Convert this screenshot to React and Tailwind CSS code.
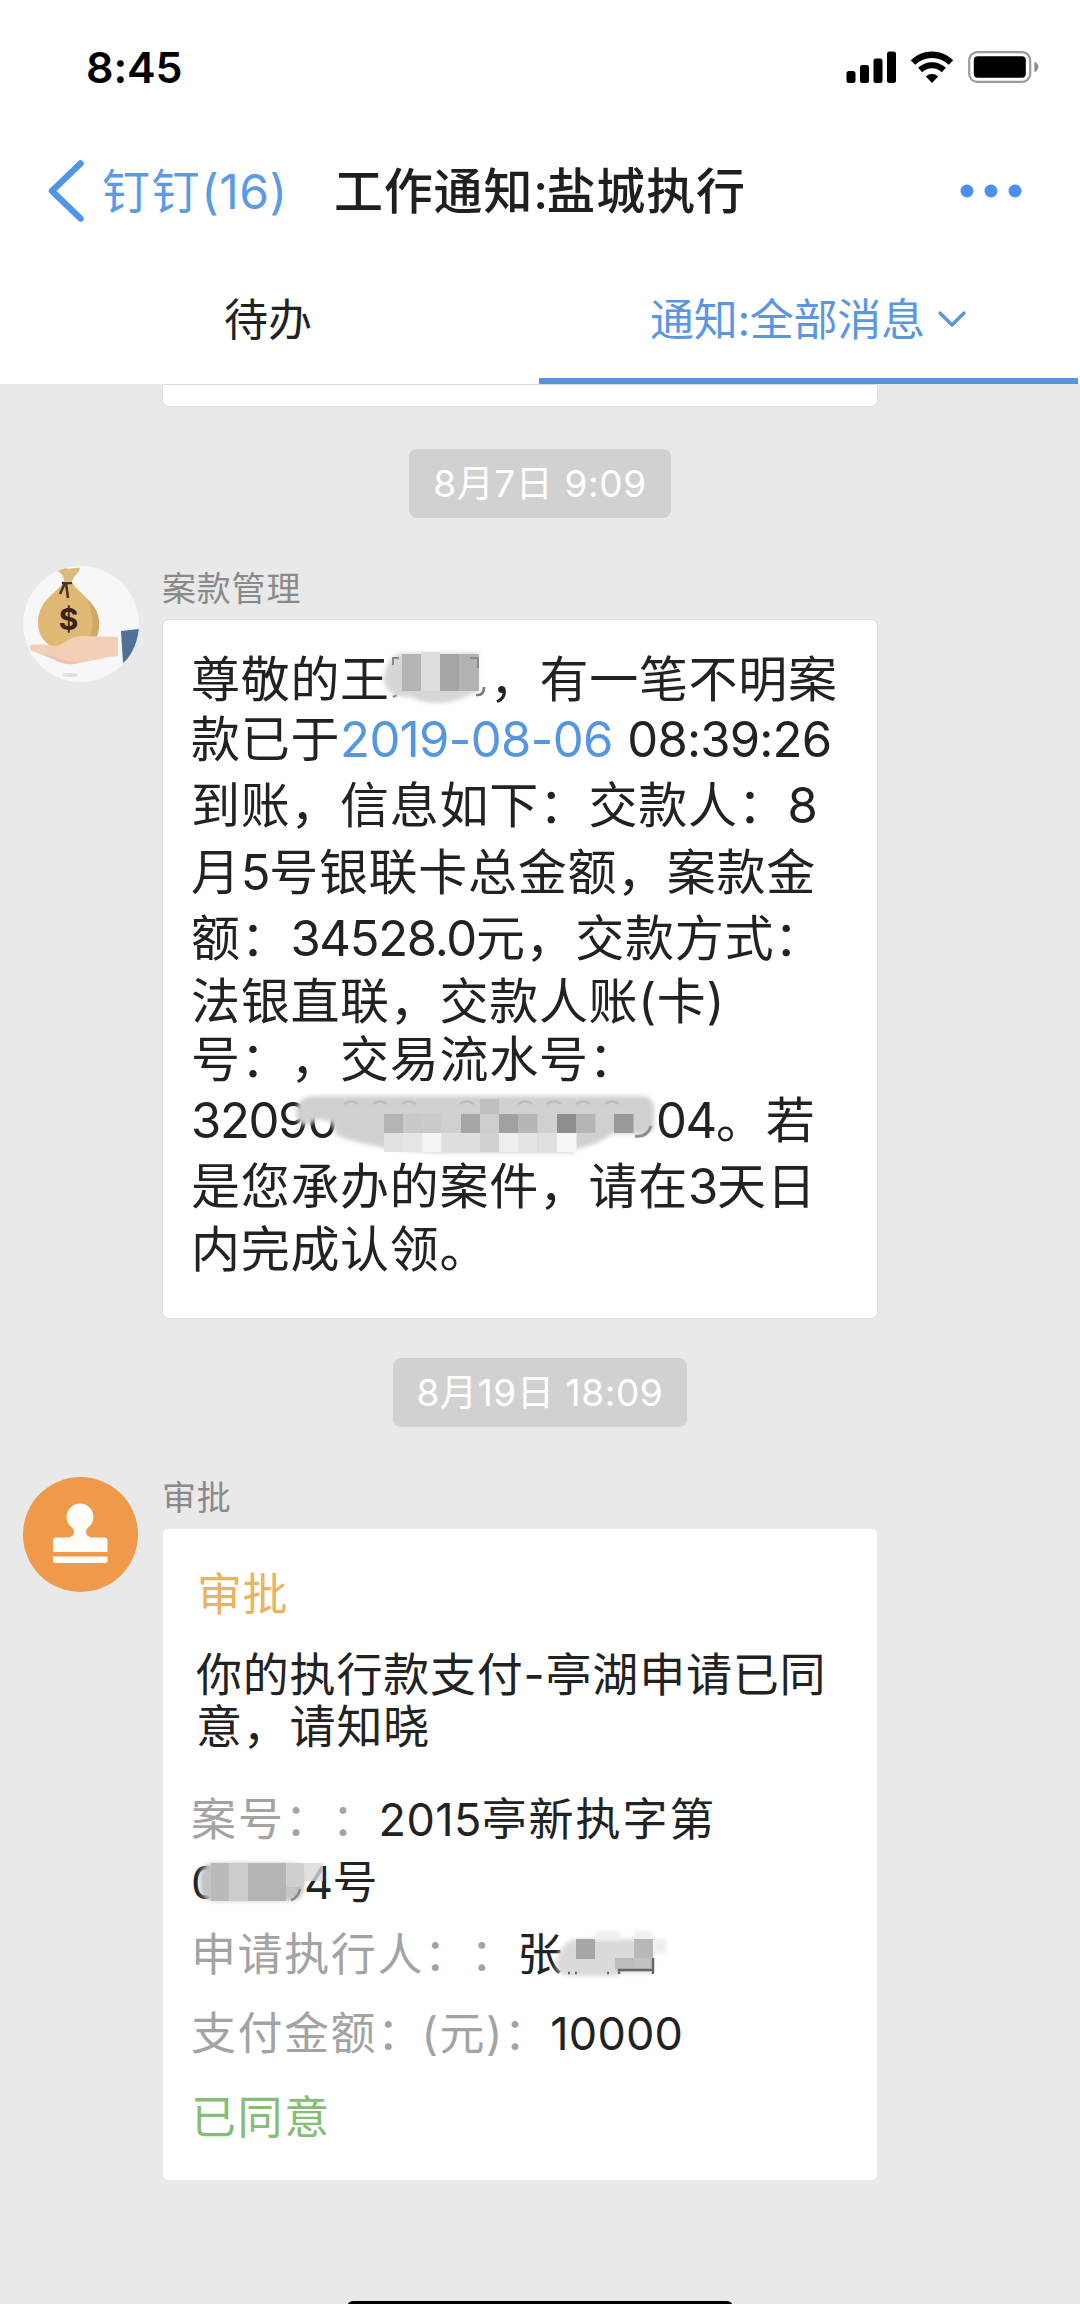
function StatusBar() {
  return (
    <div className="flex h-[133px] items-center justify-between pl-[86px] pr-[40px]">
      <span className="text-[43px] font-semibold leading-[50px] tracking-[-0.1px] text-black">8:45</span>
      <div className="flex items-center">
        <svg width="50" height="32" viewBox="0 0 50 32" className="mr-[14px]">
          <rect x="0.5" y="20" width="9" height="12" rx="2.5" />
          <rect x="14" y="14" width="9" height="18" rx="2.5" />
          <rect x="27.5" y="7.5" width="9" height="24.5" rx="2.5" />
          <rect x="41" y="0.5" width="9" height="31.5" rx="2.5" />
        </svg>
        <svg width="44" height="32" viewBox="0 0 44 32" className="mr-[14px]">
          <path d="M3 11.5a27 27 0 0 1 38 0" fill="none" stroke="#000" strokeWidth="6.4" />
          <path d="M10.2 19a17 17 0 0 1 23.6 0" fill="none" stroke="#000" strokeWidth="6" />
          <path d="M22 32l-6.2-6.4a9 9 0 0 1 12.4 0z" />
        </svg>
        <svg width="72" height="32" viewBox="0 0 72 32">
          <rect x="1.2" y="1.2" width="61" height="29.6" rx="8" fill="none" stroke="#9b9b9b" strokeWidth="2.2" />
          <rect x="5.8" y="5.3" width="52" height="21.4" rx="4" />
          <path d="M66.3 10.8c5.4 1.6 5.4 8.8 0 10.4z" fill="#8f8f8f" />
        </svg>
      </div>
    </div>
  );
}

function NavBar() {
  return (
    <div className="flex h-[115px] items-center whitespace-nowrap pl-[46px]">
      <svg width="40" height="64" viewBox="0 0 40 64" fill="none" stroke="#5096e8" strokeWidth="6.5" strokeLinecap="round" strokeLinejoin="round">
        <path d="M34.5 4.5L6 32l28.5 27.5" />
      </svg>
      <span className="ml-[16px] w-[232px] pt-[2px] text-[48px] leading-[56px] tracking-[0.5px] text-[#5b9be6]">
        <span className="tracking-[1.6px]">钉钉</span>(16)
      </span>
      <h1 className="pt-[2px] text-[49px] font-medium leading-[56px] tracking-[0.8px] text-[#1f1f1f]">
        工作通知<span className="tracking-[-1.5px]">:</span>盐城执行
      </h1>
      <svg width="62" height="16" viewBox="0 0 62 16" fill="#4d90f3" className="ml-auto mr-[58px]">
        <circle cx="7" cy="8" r="6.5" />
        <circle cx="31" cy="8" r="6.5" />
        <circle cx="55" cy="8" r="6.5" />
      </svg>
    </div>
  );
}

function Tabs() {
  return (
    <div className="flex h-[136px] whitespace-nowrap text-[44px] leading-[56px]">
      <div className="flex w-[539px] items-center justify-center border-b-[6px] border-transparent pr-[3px] pt-[13px] text-[#222]">
        待办
      </div>
      <div className="flex w-[539px] items-center border-b-[6px] border-[#5b90e0] pl-[111px] pt-[13px] text-[#5b97df]">
        <span className="tracking-[-0.3px]">通知:全部消息</span>
        <svg width="30" height="20" viewBox="0 0 30 20" fill="none" stroke="#5b97df" strokeWidth="3.4" strokeLinecap="round" strokeLinejoin="round" className="ml-[12px]">
          <path d="M3 3l12 12L27 3" />
        </svg>
      </div>
    </div>
  );
}

function TimePill({ children }) {
  return (
    <div className="flex h-[69px] items-center self-center rounded-[8px] bg-[#d1d1d1] px-[24px] pt-[1px] text-[37px] tracking-[0.6px] text-white">
      {children}
    </div>
  );
}

function MoneyAvatar() {
  return (
    <svg width="116" height="116" viewBox="0 0 116 116" className="-mt-[2px] shrink-0">
      <clipPath id="avatar">
        <circle cx="58" cy="58" r="58" />
      </clipPath>
      <circle cx="58" cy="58" r="58" fill="#f7f7f7" />
      <g clipPath="url(#avatar)">
        <path d="M41 16C34 27 15 34 15 57c0 12 7 20 13 23h38c7-4 11-13 10-24C75 35 56 29 49 16z" fill="#dfb974" />
        <path d="M64 34c9 7 12 15 12 23 0 10-4 19-10 23h-4c8-9 11-28 2-46z" fill="#cfa766" />
        <path d="M33 3c4 1 6 0 9-1 5 2 9-1 15 0-1 5-5 6-8 13h-8c0-6-4-8-8-12z" fill="#dcba7e" />
        <path d="M39 17h10M42 17l-5 11M43 17l2 15" stroke="#4c3423" strokeWidth="2.6" fill="none" />
        <path d="M8 79c8-1 17 0 25 1 8-1 13-10 27-10l35 1v19c-14 1-20 4-34 6-11 3-17 1-27-4L9 85c-3-2-3-5-1-6z" fill="#f3cfb6" />
        <path d="M10 85l26 7c9 4 16 5 25 2l-9 4c-9 1-15-1-22-5z" fill="#eec2ab" />
        <path d="M98 65l19-2v20l-17 14z" fill="#4f7195" />
        <ellipse cx="47" cy="109" rx="8" ry="2" fill="#dedede" />
      </g>
      <text x="45.5" y="64" textAnchor="middle" fontSize="30" fontWeight="700" fill="#3a2218">$</text>
    </svg>
  );
}

function StampAvatar() {
  return (
    <svg width="116" height="116" viewBox="0 0 116 116" className="shrink-0">
      <circle cx="57.5" cy="57.5" r="57.5" fill="#ef994b" />
      <g fill="#fffdf8">
        <path d="M57 26.5a13.3 13.3 0 0 1 8 24c-3 3-3 8 3 10h13.5q3 0 3 3v11.5H30V63.5q0-3 3-3h13c6-2 6-7 3-10a13.3 13.3 0 0 1 8-24z" />
        <path d="M30 79.5h54.5v4q0 2.5-2.5 2.5H32.5q-2.5 0-2.5-2.5z" />
      </g>
    </svg>
  );
}

// Censored name after 王
function NameMosaic() {
  return (
    <svg width="100" height="56" viewBox="0 0 100 56" className="relative -top-[9px] inline-block overflow-visible align-middle">
      <path d="M94 40q0 9-8 8M3 50l4-2" stroke="#777" strokeWidth="2.5" fill="none" />
      <path d="M-6 30Q-2 8 12 6h76v38Q66 56 50 56 30 56 22 50-6 52-6 30z" fill="#d6d6d6" className="blur-[2px]" />
      <rect x="12" y="7" width="19" height="37" fill="#b4b4b4" />
      <rect x="31" y="5" width="19" height="39" fill="#dcdcdc" />
      <rect x="50" y="7" width="19" height="37" fill="#a6a6a6" />
      <rect x="69" y="7" width="20" height="37" fill="#b2b2b2" />
      <path d="M3 18v-7h6M80 11h8v10" stroke="#8a8a8a" strokeWidth="2" fill="none" />
    </svg>
  );
}

const serialBlocks = [
  [90, "#b4b4b4"],
  [109, "#c9c9c9"],
  [128, "#cbcbcb"],
  [167, "#a6a6a6"],
  [186, "#cdcdcd"],
  [205, "#a0a0a0"],
  [224, "#b6b6b6"],
  [263, "#8e8e8e"],
  [282, "#b5b5b5"],
  [320, "#999999"],
];

const serialTail = [
  [90, "#e2e2e2"],
  [109, "#e6e6e6"],
  [128, "#f4f4f4"],
  [148, "#dedede"],
  [167, "#dedede"],
  [186, "#d1d1d1"],
  [205, "#eeeeee"],
  [224, "#e4e4e4"],
  [244, "#e0e0e0"],
  [263, "#f6f6f6"],
];

function SerialMosaic() {
  return (
    <svg width="362" height="64" viewBox="0 0 362 64" className="absolute -top-[2px] left-[103px] overflow-visible">
      <path d="M2 20Q4 5 22 5H346Q360 5 360 18V34Q360 43 346 43H318Q300 56 280 58V62H150Q80 60 42 44L38 32Q22 24 16 34 2 36 2 20z" fill="#d0d0d0" className="blur-[2px]" />
      {serialBlocks.map(([x, fill]) => (
        <rect key={x} x={x} y="23" width="19.5" height="19" fill={fill} />
      ))}
      {serialTail.map(([x, fill]) => (
        <rect key={x} x={x} y="42" width="19.5" height="19" fill={fill} />
      ))}
      <rect x="186" y="8" width="19" height="15" fill="#bfbfbf" />
      <path d="M50 13q7-5 14 0M79 13q7-5 14 0M108 13q7-5 14 0M166 13q7-5 14 0M224 13q7-5 14 0M253 13q7-5 14 0M282 13q7-5 14 0M311 13q7-5 14 0" stroke="#bdbdbd" strokeWidth="2.5" fill="none" />
      <path d="M341 45q12 2 16-10" stroke="#8d8d8d" strokeWidth="3" fill="none" />
    </svg>
  );
}

function Digits({ children }) {
  return <span className="tracking-[-1.3px]">{children}</span>;
}

function PaymentCard() {
  return (
    <div className="mt-[9px] h-[700px] w-[716px] rounded-[7px] border border-[#dedede] bg-white pl-[28px] pt-[32px] text-[49px] leading-[56px] tracking-[0.7px] text-[#222]">
      <p className="h-[56px]">尊敬的王<NameMosaic />，有一笔不明案</p>
      <p className="mt-[4px] h-[56px]">
        款已于<span className="tracking-[-0.6px] text-[#5596e2]">2019-08-06</span> <span className="tracking-[-0.8px]">08:39:26</span>
      </p>
      <p className="mt-[10px] h-[56px]">到账，信息如下：交款人：8</p>
      <p className="mt-[11px] h-[56px]">月<Digits>5</Digits>号银联卡总金额，案款金</p>
      <p className="mt-[10px] h-[56px]">额：<Digits>34528.0</Digits>元，交款方式：</p>
      <p className="mt-[7px] h-[56px]">法银直联，交款人账(卡)</p>
      <p className="mt-[2px] h-[56px]">号：，交易流水号：</p>
      <p className="relative mt-[5px] flex h-[56px]">
        <span className="w-[465px] tracking-[-1.3px]">32090</span>
        <span className="tracking-[-1.3px]">04</span>。若
        <SerialMosaic />
      </p>
      <p className="mt-[10px] h-[56px]">是您承办的案件，请在<Digits>3</Digits>天日</p>
      <p className="mt-[7px] h-[56px]">内完成认领。</p>
    </div>
  );
}

function CaseMosaic() {
  return (
    <svg width="130" height="44" viewBox="0 0 130 44" className="absolute left-[8px] top-[3px] overflow-visible">
      <rect x="1" y="2" width="104" height="38" rx="14" fill="#c4c4c4" className="blur-[2px]" />
      <rect x="12" y="2" width="18" height="38" fill="#bababa" />
      <rect x="30" y="2" width="19" height="38" fill="#cccccc" />
      <rect x="49" y="2" width="38" height="38" fill="#b5b5b5" />
      <rect x="87" y="2" width="18" height="24" fill="#cfcfcf" />
      <rect x="105" y="2" width="19" height="18" fill="#d8d8d8" opacity="0.8" />
      <path d="M92 39q7-2 9-11" stroke="#888" strokeWidth="2.5" fill="none" />
    </svg>
  );
}

function ApplicantMosaic() {
  return (
    <svg width="110" height="50" viewBox="0 0 110 50" className="relative -top-[1px] left-[2px] inline-block overflow-visible align-middle">
      <path d="M-10 28Q-4 8 10 6H87V40H52V43H6Q-10 44-10 28z" fill="#dadada" className="blur-[2px]" />
      <path d="M12-2h18v8h24v-8M68-2h18v8h14v14H87V6H68z" fill="#eeeeee" className="blur-[2px]" />
      <rect x="10" y="6" width="19" height="20" fill="#a6a6a6" />
      <rect x="49" y="25" width="19" height="12" fill="#bdbdbd" />
      <rect x="68" y="6" width="19" height="19" fill="#b8b8b8" />
      <rect x="68" y="25" width="19" height="12" fill="#c2c2c2" />
      <path d="M52 37h34M53 37v4M87 25v16M2 40h2M9 40h2M41 40h2" stroke="#666" strokeWidth="2.4" fill="none" />
    </svg>
  );
}

function ApprovalCard() {
  return (
    <div className="mt-[9px] h-[653px] w-[716px] rounded-[7px] border border-[#ececec] bg-white pl-[28px] pt-[41px] text-[45px] leading-[50px] tracking-[1.9px] text-[#222]">
      <p className="ml-[6px] h-[50px] tracking-[0.5px] text-[#e9b45f]">审批</p>
      <p className="ml-[5px] mt-[29px] h-[50px] text-[46px] tracking-[0.8px]">你的执行款支付-亭湖申请已同</p>
      <p className="ml-[5px] mt-[2px] h-[50px] text-[46px] tracking-[0.8px]">意，请知晓</p>
      <p className="mt-[44px] h-[50px]">
        <span className="text-[#a3a3a3]">案号：：</span>
        <span className="tracking-[0.4px]">2015</span>亭新执字第
      </p>
      <p className="relative mt-[13px] h-[50px]">
        <span className="inline-block w-[113px]">0</span>
        <span className="tracking-[-0.5px]">4</span>号
        <CaseMosaic />
      </p>
      <p className="mt-[22px] h-[50px]">
        <span className="tracking-[1.6px] text-[#a3a3a3]">申请执行人：：</span>张<ApplicantMosaic />
      </p>
      <p className="mt-[29px] h-[50px]">
        <span className="tracking-[1.5px] text-[#a3a3a3]">支付金额：<span className="-ml-[2px]">(元)：</span></span>
        <span className="tracking-[0.2px]">10000</span>
      </p>
      <p className="mt-[34px] h-[50px] tracking-[1.6px] text-[#86bd74]">已同意</p>
    </div>
  );
}

function Message({ avatar, name, children }) {
  return (
    <div className="mt-[50px] flex gap-[23px] pl-[23px]">
      {avatar}
      <div>
        <div className="h-[42px] text-[34px] leading-[42px] tracking-[0.8px] text-[#8a8a8a]">{name}</div>
        {children}
      </div>
    </div>
  );
}

export default function App() {
  return (
    <div className="relative h-[2304px] w-[1080px] overflow-hidden whitespace-nowrap bg-[#e9e9e9] font-['Inter','Noto_Sans_CJK_SC',sans-serif] [text-spacing-trim:space-all]">
      <header className="h-[384px] bg-white">
        <StatusBar />
        <NavBar />
        <Tabs />
      </header>

      <main className="flex flex-col">
        {/* bottom edge of the previous message */}
        <div className="mb-[42px] ml-[162px] h-[23px] w-[716px] rounded-b-[7px] border border-[#dedede] bg-white" />
        <TimePill>8月7日 9:09</TimePill>
        <Message avatar={<MoneyAvatar />} name="案款管理">
          <PaymentCard />
        </Message>
        <div className="h-[39px]" />
        <TimePill>8月19日 18:09</TimePill>
        <Message avatar={<StampAvatar />} name="审批">
          <ApprovalCard />
        </Message>
      </main>

      <div className="absolute bottom-[-9px] left-[347px] h-[12px] w-[386px] rounded-full bg-black" />
    </div>
  );
}
